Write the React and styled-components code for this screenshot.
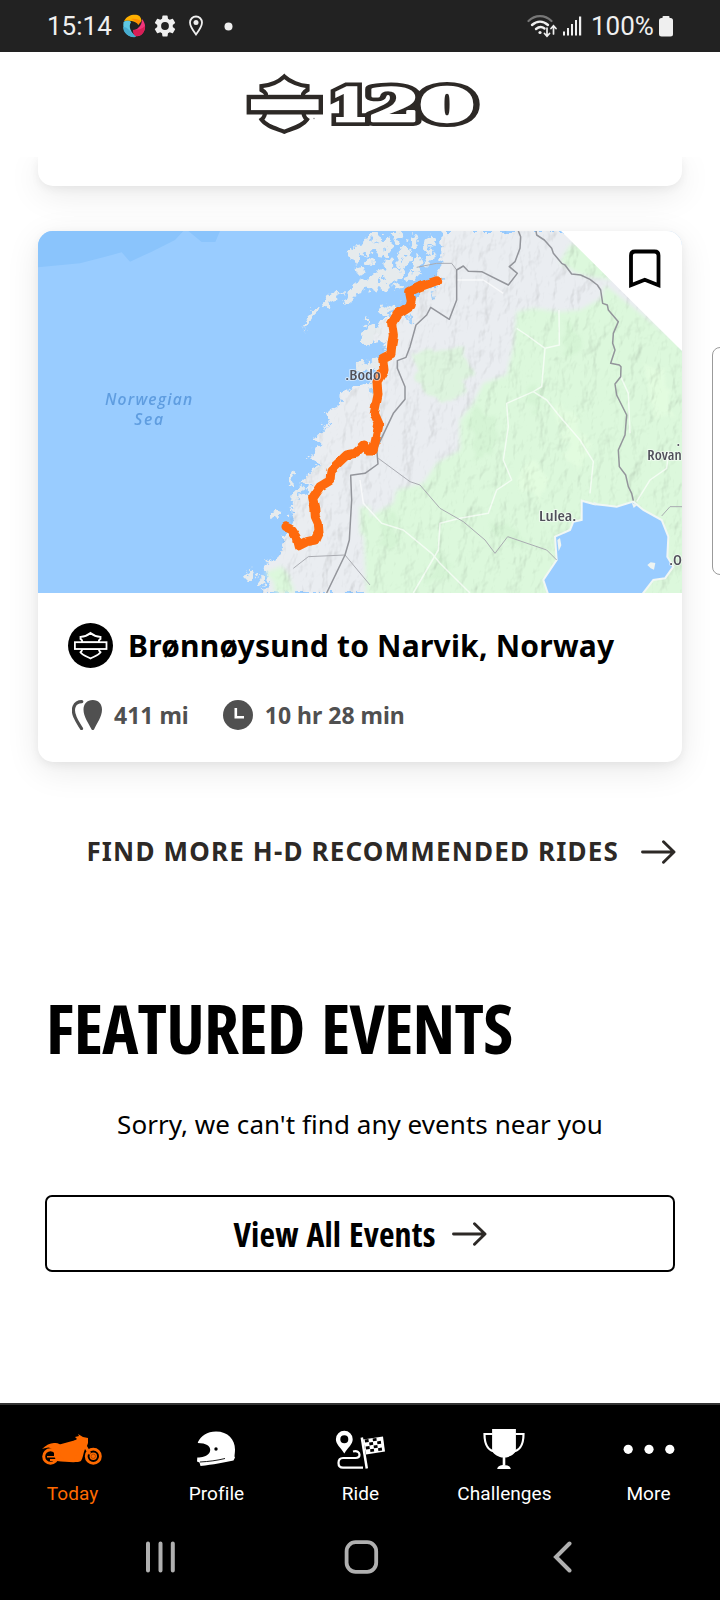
import React from "react";
import styled, { createGlobalStyle } from "styled-components";

const GlobalStyle = createGlobalStyle`
  *, *::before, *::after { box-sizing: border-box; }
  body { margin: 0; background: #fff; }
`;

const sans = `"Noto Sans", "Open Sans", sans-serif`;
const roboto = `Roboto, "Noto Sans", sans-serif`;
const ink = "#2d2926";

const Screen = styled.div`
  position: relative;
  display: flex;
  flex-direction: column;
  width: 720px;
  height: 1600px;
  overflow: hidden;
  background: #fff;
  font-family: ${sans};
  color: #000;
`;

const StatusBar = styled.div`
  display: flex;
  align-items: center;
  justify-content: space-between;
  height: 52px;
  flex: none;
  padding: 0 47px;
  background: #222;
  color: #efefef;
  font-family: ${roboto};
  font-size: 26px;
  line-height: 52px;
`;

const StatusGroup = styled.div`
  display: flex;
  align-items: center;
  height: 52px;
`;

const StatusText = styled.span`
  width: ${(p) => p.$width}px;
  white-space: nowrap;
`;

const Header = styled.header`
  position: relative;
  z-index: 2;
  display: flex;
  justify-content: center;
  flex: none;
  height: 105px;
  padding: 20px 0 0 3px;
  background: #fff;
`;

const Main = styled.main`
  flex: 1;
  display: flex;
  flex-direction: column;
`;

const Card = styled.article`
  flex: none;
  width: 644px;
  margin: ${(p) => p.$margin || "0 38px"};
  height: ${(p) => p.$height}px;
  border-radius: ${(p) => (p.$tail ? "0 0 15px 15px" : "15px")};
  background: #fff;
  box-shadow: 0 8px 34px rgba(0, 0, 0, 0.09), 0 3px 10px rgba(0, 0, 0, 0.06);
`;

const MapFrame = styled.div`
  position: relative;
  height: 362px;
  border-radius: 15px 15px 0 0;
  overflow: hidden;
  svg { display: block; }
`;

const Bookmark = styled.button`
  position: absolute;
  top: 0;
  right: 0;
  width: 121px;
  height: 120px;
  padding: 0;
  border: 0;
  background: none;
`;

const CardBody = styled.div`
  display: flex;
  flex-direction: column;
  gap: 32px;
  padding: 30px 30px 32px;
`;

const TitleRow = styled.div`
  display: flex;
  align-items: center;
  gap: 15px;
  height: 45px;
`;

const RideTitle = styled.h2`
  margin: 0;
  font-size: 30px;
  line-height: 45px;
  font-weight: 700;
  letter-spacing: 0.22px;
  white-space: nowrap;
`;

const Stats = styled.div`
  display: flex;
  height: 30px;
  padding-left: 4px;
  gap: 34px;
`;

const Stat = styled.div`
  display: flex;
  align-items: center;
  gap: 12px;
  color: #505050;
  font-size: 23px;
  line-height: 30px;
  font-weight: 700;
  white-space: nowrap;
`;

const MoreLink = styled.a`
  display: flex;
  align-items: center;
  justify-content: flex-end;
  flex: none;
  gap: 22px;
  height: 40px;
  margin: 70px 44px 0 0;
  color: ${ink};
  font-size: 26px;
  line-height: 38px;
  font-weight: 700;
  letter-spacing: 1.17px;
  white-space: nowrap;
`;

const LinkLabel = styled.span`
  height: 40px;
`;

const SectionTitle = styled.h1`
  flex: none;
  margin: 116px 0 0 46px;
  height: 80px;
  font-family: "Open Sans", "Noto Sans", sans-serif;
  font-stretch: 75%;
  font-size: 68.6px;
  line-height: 80px;
  font-weight: 700;
  letter-spacing: -0.75px;
  word-spacing: 5px;
  white-space: nowrap;
`;

const EmptyText = styled.p`
  flex: none;
  margin: 36px 0 0;
  height: 40px;
  font-size: 26px;
  line-height: 40px;
  letter-spacing: 0.05px;
  text-align: center;
  white-space: nowrap;
`;

const OutlineButton = styled.button`
  display: flex;
  align-items: center;
  justify-content: center;
  flex: none;
  gap: 16px;
  height: 77px;
  margin: 51px 45px 0;
  padding: 0;
  border: 2px solid #000;
  border-radius: 7px;
  background: #fff;
  color: #000;
  font-family: "Open Sans", "Noto Sans", sans-serif;
  font-stretch: 75%;
  font-size: 34px;
  font-weight: 700;
  letter-spacing: 0.16px;
  word-spacing: 1.5px;
  white-space: nowrap;
`;

const SidePanel = styled.div`
  position: absolute;
  left: 712px;
  top: 347px;
  width: 24px;
  height: 228px;
  border: 1.5px solid #9b9b9b;
  border-radius: 8px;
  background: #fff;
`;

const TabBar = styled.nav`
  display: grid;
  grid-template-columns: repeat(5, 144px);
  flex: none;
  height: 113px;
  border-top: 2px solid #333;
  background: #000;
`;

const Tab = styled.div`
  display: flex;
  flex-direction: column;
  align-items: center;
  padding: 20px 0 0 1px;
  gap: 12px;
  color: ${(p) => (p.$active ? "#ff6a00" : "#fff")};
  font-family: ${roboto};
  font-size: 19px;
  line-height: 26px;
  letter-spacing: 0.08px;
  svg { display: block; margin-right: 2px; }
`;

const SystemBar = styled.div`
  display: flex;
  align-items: center;
  justify-content: space-between;
  flex: none;
  height: 84px;
  padding: 0 148px 2px 146px;
  background: #000;
`;

/* ---------- icons ---------- */

const AppSwirl = () => (
  <svg width="24" height="24" viewBox="0 0 24 24">
    <path d="M2 7C5 2 9 .5 14 .8c4 .4 5 3 5.500 6L16 11C14 7 9 6 2 7z" fill="#ffb000" />
    <path d="M9 5c5-1 8 1 10.500 2L16 11C14 8 12 6 9 5z" fill="#ff8c00" />
    <path d="M20 5c4 5 4 10 1 14-3 4-7 4-9 2l-1-5c5-1 9-4 9-11z" fill="#f2357b" />
    <path d="M11 16c5 0 9-1 12-4 0 8-6 12-11 9z" fill="#d81e56" />
    <path d="M1.500 8C5 6 8 7 9 8c-3 5 0 10 5 15C6 24 0 18 1.500 8z" fill="#5fc8e4" />
    <path d="M1.200 13c4 0 6 3 12.800 10-7 1-13-4-12.800-10z" fill="#47add0" />
    <circle cx="12.500" cy="12" r="3.600" fill="#222" />
  </svg>
);

const Gear = () => (
  <svg width="26" height="26" viewBox="0 0 24 24" fill="#efefef">
    <path d="M19.140 12.940c.04-.3.06-.61.06-.94s-.02-.64-.07-.94l2.030-1.580a.49.490 0 0 0 .12-.61l-1.920-3.320a.49.490 0 0 0-.59-.22l-2.390.96a7 7 0 0 0-1.620-.94l-.36-2.540A.48.480 0 0 0 13.920 2.400h-3.840a.48.480 0 0 0-.47.410l-.36 2.540c-.59.24-1.130.57-1.620.94l-2.390-.96a.48.480 0 0 0-.59.220L2.740 8.870a.48.480 0 0 0 .12.610l2.030 1.580c-.05.3-.09.63-.09.940s.02.640.07.940l-2.030 1.580a.49.490 0 0 0-.12.610l1.920 3.320c.12.220.37.290.59.220l2.390-.96c.5.380 1.030.7 1.620.940l.36 2.540c.05.240.24.410.48.410h3.840c.24 0 .44-.17.470-.41l.36-2.540c.59-.24 1.130-.56 1.620-.94l2.390.96c.22.080.47 0 .59-.22l1.920-3.320a.47.470 0 0 0-.12-.61zM12 15.600a3.600 3.600 0 1 1 0-7.200 3.600 3.600 0 0 1 0 7.200z" />
  </svg>
);

const PlacePin = () => (
  <svg width="16" height="22" viewBox="0 0 16 22" fill="none">
    <path d="M8 1.500a6 6 0 0 1 6 6c0 4-6 12-6 12s-6-8-6-12a6 6 0 0 1 6-6z" stroke="#efefef" strokeWidth="1.800" />
    <circle cx="8" cy="7.600" r="2.500" fill="#efefef" />
  </svg>
);

const Dot = () => (
  <svg width="9" height="9"><circle cx="4.500" cy="4.500" r="4" fill="#efefef" /></svg>
);

const Wifi = () => (
  <svg width="30" height="24" viewBox="0 0 30 24" fill="none" strokeLinecap="round">
    <path d="M1.500 7C8 .5 18 .5 24.500 7" stroke="#777" strokeWidth="2.200" />
    <path d="M5 11c5-4.500 11-4.500 16 0M9 15c3-2.500 6-2.500 8.500-.5" stroke="#efefef" strokeWidth="2.400" />
    <circle cx="13" cy="18.500" r="1.600" fill="#efefef" />
    <path d="M20 14v8m-2.500-2.500L20 22.300l2.500-2.800M26.500 20v-8m-2.500 2.500 2.500-2.800 2.500 2.800" stroke="#efefef" strokeWidth="1.700" />
  </svg>
);

const Signal = () => (
  <svg width="19" height="20" fill="#efefef">
    <rect x="0" y="15.500" width="2" height="4" /><rect x="4" y="12" width="2" height="7.500" />
    <rect x="8" y="8" width="2" height="11.500" /><rect x="12" y="4" width="2" height="15.500" />
    <rect x="16" y="0.500" width="2.200" height="19" />
  </svg>
);

const Battery = () => (
  <svg width="14" height="21" fill="#efefef">
    <rect x="3.500" y="0" width="7" height="5" rx="1" /><rect x="0" y="2" width="14" height="18.500" rx="2.500" />
  </svg>
);

const logoLayers = [
  { color: ink, extra: 7.5 },
  { color: "#fff", extra: 0 },
];

const BrandLogo = () => (
  <svg width="236" height="66" viewBox="244 72 236 66" role="img">
    <path d="M284.300 76.500C290 82 300 85.500 307.500 86.200V90c-4 2-5.500 4-4 8H265.500c1.500-4 0-6-4-8v-3.800C269 85.500 278.500 82 284.300 76.500z" fill="#fff" stroke={ink} strokeWidth="4.200" />
    <path d="M264.500 112c1 3 0 5-3 7.500 4.500 6.500 13 8.500 22.800 12.300C294 128 302.500 126 307 119.500c-3-2.500-4-4.500-3-7.500z" fill="#fff" stroke={ink} strokeWidth="4.200" />
    <rect x="248.800" y="97" width="72" height="15.300" fill="#fff" stroke={ink} strokeWidth="4.400" />
    <circle cx="314" cy="118.500" r=".8" fill="#999" />
    {logoLayers.map(({ color, extra }) => (
      <g key={color} fontFamily="DejaVu Serif, serif" fontWeight="700" fill={color} stroke={color}>
        <text x="330" y="121.300" fontSize="45" strokeWidth={2.5 + extra} textLength="39" lengthAdjust="spacingAndGlyphs">1</text>
        <text x="368" y="121.300" fontSize="45" strokeWidth={2.5 + extra} strokeLinejoin="round" textLength="52" lengthAdjust="spacingAndGlyphs">2</text>
        <text x="422" y="120" fontSize="42" strokeWidth={5.5 + extra} strokeLinejoin="round" textLength="50" lengthAdjust="spacingAndGlyphs">0</text>
      </g>
    ))}
  </svg>
);

const Badge = () => (
  <svg width="45" height="45" viewBox="0 0 45 45">
    <circle cx="22.500" cy="22.500" r="22.500" fill="#000" />
    <g fill="#000" stroke="#fff" strokeWidth="1.800">
      <path d="M22.500 10c3 2.500 7 3.700 10 3.900v2c-1.700 1-2 2-1.500 3.500H14c.5-1.500.2-2.500-1.500-3.500v-2c3-.2 7-1.400 10-3.900z" />
      <path d="M14 26c.5 1.500 0 2-1.500 3.200 2 3 5.500 4 10 6.300 4.500-2.300 8-3.300 10-6.300-1.500-1.200-2-1.700-1.500-3.200z" />
      <rect x="6.900" y="19.200" width="31.600" height="6.800" />
    </g>
  </svg>
);

const DistanceIcon = () => (
  <svg width="30" height="30" viewBox="0 0 30 30" fill="none">
    <path d="M9.800 1.600C2 1.600-.5 9 3 17c2 5 4.500 8 6.500 11.500" stroke="#505050" strokeWidth="3.200" strokeLinecap="round" />
    <path d="M20.800 0C26.500 0 30 4 30 9.500 30 17 25 23 22.500 28.500c-.8 2-2.600 2-3.400 0C16.500 23 11.500 17 11.500 9.500 11.500 4 15 0 20.800 0z" fill="#505050" />
  </svg>
);

const ClockIcon = () => (
  <svg width="30" height="30" viewBox="0 0 30 30" fill="none">
    <circle cx="15" cy="15" r="15" fill="#505050" />
    <path d="M12.800 8v9.300H21" stroke="#fff" strokeWidth="2.600" />
  </svg>
);

const Arrow = () => (
  <svg width="35" height="24" viewBox="0 0 35 24" fill="none" stroke={ink} strokeWidth="2.900" strokeLinecap="round" strokeLinejoin="round">
    <path d="M1.500 12H33M22.500 1.700 33 12 22.500 22.300" />
  </svg>
);

const BookmarkIcon = () => (
  <svg width="121" height="120" viewBox="0 0 121 120">
    <path d="M0 0H121V120z" fill="#fff" />
    <path d="M70 54.200V24.500q0-4 4-4h19.500q4 0 4 4v29.700L83.800 48.700z" fill="none" stroke="#000" strokeWidth="3.800" />
  </svg>
);

/* ---------- ride map ---------- */

const islands = [
  "M820 335l8-35 12-25 12-10 18-6-6 18-18 18-14 20z",
  "M876 248l14-20 22-18 16 8-10 22-22 14-16 8z",
  "M924 218l14-2-8 14zM940 244l14-30 18-20 20-14 26-10 14 10-12 26-26 8-24 16-8 20z",
  "M960 85l18-10 10 12 20-30 22-2 10 30-24 22-22-4-16 30-20-8z",
  "M976 150l20-12 8 18-18 6zM1000 130l14-14 16 10-12 12z",
  "M1010 33h30l10 30-22 14-16-16z",
  "M1000 200l20-28 24-22 14 10 20-28 22 20 18-12-4 34-24 6-22 34-16-18-24 20z",
  "M1050 60l20-12 14 26-14 40-24-4-12-24zM1082 33h28l6 26-20 12z",
  "M1100 110l20-34 20 14 4 32-26 34-20-14zM1134 60l18-18 18 14-12 26-18-2z",
  "M1060 130l20-14 10 24-20 16zM1145 130l22-26 14 20-16 30-20 4z",
  "M1180 80l20-34 14 16-18 34zM1186 110l24-24 10 26-30 30z",
  "M1120 180l20-22 30 4-20 26zM1090 190l20-8 4 22-20 6z",
  "M1050 270l20-16 24 4-8 24-30 8zM1004 304l14-6-6 20zM990 345l20-18 16 8 10 30-28 14z",
  "M1010 330l30-18 24 14-14 22-30 4zM980 435l14-16 26 4 4 30-40 6z",
  "M1010 440l20-20 34-6-4 36-30 10z",
  "M770 795l8-18 14-20 8 12-14 24zM780 840l10-28 30-14 10 8-26 14-10 26z",
  "M845 750l20-12 22-8-4 16-24 12zM725 885l8-14 12 6-4 22z",
  "M640 1076l8-28 20-2 6 24-18 10zM680 1080l12-16 14 10-6 24-16-4z",
  "M700 1022l18-4-6 12z",
];

const RideMap = () => (
  <svg width="644" height="362" viewBox="24 33 1932 1086">
    <defs>
      <filter id="ragged" x="-5%" y="-5%" width="110%" height="110%">
        <feTurbulence type="fractalNoise" baseFrequency="0.045" numOctaves="3" seed="4" result="n" />
        <feDisplacementMap in="SourceGraphic" in2="n" scale="42" xChannelSelector="R" yChannelSelector="G" />
      </filter>
      <filter id="wiggle" x="-10%" y="-5%" width="120%" height="110%">
        <feTurbulence type="fractalNoise" baseFrequency="0.035" numOctaves="1" seed="2" result="n" />
        <feDisplacementMap in="SourceGraphic" in2="n" scale="13" xChannelSelector="R" yChannelSelector="G" />
      </filter>
      <filter id="relief" x="0" y="0" width="100%" height="100%">
        <feTurbulence type="fractalNoise" baseFrequency="0.022 0.012" numOctaves="4" seed="8" result="n" />
        <feDiffuseLighting in="n" surfaceScale="15" diffuseConstant="1.250" lightingColor="#fff" result="l">
          <feDistantLight azimuth="225" elevation="55" />
        </feDiffuseLighting>
        <feComposite in="l" in2="SourceAlpha" operator="in" />
      </filter>
      <filter id="soft"><feGaussianBlur stdDeviation="7" /></filter>
      <filter id="patchy" x="-20%" y="-20%" width="140%" height="140%">
        <feTurbulence type="fractalNoise" baseFrequency="0.02" numOctaves="3" seed="11" result="n" />
        <feDisplacementMap in="SourceGraphic" in2="n" scale="70" xChannelSelector="R" yChannelSelector="G" />
        <feGaussianBlur stdDeviation="5" />
      </filter>
      <path id="coast" d="M690 1119l30-34-10-25-10-25 40-15 15-30 5-40 30-15-15-55 25-50 30-10 15-30-35 0 40-40 25-15-35-15 10-30 30-10-25-25 25-30 25-15-20-30 40-20 5-40 30-10 60-20 30-30 24-40-20-30 10-30-50 10 20-50 40-30 40-20 30-20 30-40 50-10-14-24 24-40V33H1956V1119z" />
      <clipPath id="landclip"><use href="#coast" /></clipPath>
    </defs>
    <rect x="24" y="33" width="1932" height="1086" fill="#99ccff" />
    <path d="M24 33H460L435 60 365 95 300 125 275 97 220 112 150 130 24 142zM475 33H570L556 66 515 66z" fill="#8ac4fc" />

    <g filter="url(#ragged)" fill="#eaedf1">
      <use href="#coast" />
      {islands.map((d) => <path key={d} d={d} fill="#e6ebed" />)}
      <path d="M1062 70l8 20-6 12zM1112 118l8-10 0 20zM1040 190l8-16 4 14zM1100 150l12-6-4 14zM1158 60l6-10 2 14zM1200 70l6 0-6 14zM1020 60l10-10 2 16zM1084 50l8 10-8 20zM1132 96l10-4-4 24zM1172 110l8 0-8 20zM1060 170l12-4-6 16zM1000 100l10-12 2 14zM1120 170l10-4-2 14z" fill="#99ccff" />
      <path d="M1118 270l12 4 8 22-10-6zM1140 286l14 12-6 16-10-14zM1205 215l8 4 4 22-8-6zM1104 246l14-6 4 10zM1232 170l16 8-6 6zM1056 372l14 6-10 20zM1010 510l22-4 6 12-18 6z" fill="#a8d3fb" />
    </g>

    <g filter="url(#soft)" fill="#dcf8dc">
      <path d="M1460 275L1510 265 1590 275 1650 270 1715 235 1725 195 1970 390V1135H1010L1000 900 1090 850 1100 810 1180 790 1220 730 1290 690 1290 600 1330 550 1360 490 1430 465 1450 380z" />
      <path d="M1590 125L1620 75 1660 70 1750 180 1690 172 1640 160z" />
      <path d="M990 860l30 0V960l-30-20z" />
      <path d="M735 1119l-5-35-25-25 50-20 20 25 20 55z" />
    </g>
    <g filter="url(#patchy)">
      <path d="M1150 400l80-25 70 20 20 60-20 60-50 24-80-50z" fill="#dcf4dc" opacity=".9" />
      <path d="M1330 560l60 20 20 60-30 60-60 10zM1500 480l40 20-10 60-30 10zM1600 300l50 40-20 80-30-20zM1200 1000l60 10 10 60-60 10zM1060 880l50 20-10 80-40 0zM1380 900l80 30 20 60-70-20z" fill="#cdf0cd" opacity=".5" />
      <path d="M1590 560l40 10 60 120-30 60-60-40zM1840 420l70 30 20 150-60-20zM1500 720l50 60-20 60-60-40z" fill="#e4fce0" opacity=".8" />
    </g>

    <g clipPath="url(#landclip)" style={{ mixBlendMode: "multiply" }} opacity=".23">
      <use href="#coast" filter="url(#relief)" />
    </g>

    <g transform="translate(990 0)">
      <path d="M565 1125L550 1080 590 1020 585 950 630 930 640 905 665 900V842L700 852 735 856 770 860 820 845 850 870 905 900 925 950 922 1010 940 1040 915 1075 880 1080 845 1125z" fill="#99ccff" stroke="#f1f7f4" strokeWidth="6" />
      <path d="M862 1035l10-8 14 2-4 20-10-4zM592 960l8-6 4 22-8 18zM700 845l5 12 6-8zM815 848l6 16 10-8z" fill="#eef4f2" />
      <g fill="none" stroke="#fff" strokeWidth="4.500" opacity=".65" strokeLinejoin="round">
        <path d="M470 325L500 345 555 385 598 375 597 270M555 385L545 500 520 515 440 550 445 620 430 720 455 780 410 810 385 880 300 895 240 910 235 990 200 1050 160 1119" />
        <path d="M520 515L560 540 600 590 660 660 700 725 690 820M830 845L870 780 920 745 925 700M780 465L805 520 810 640M0 780L10 850 65 910 130 930 215 1000 240 1030 330 1119" />
        <path d="M290 180L370 180 430 220" />
      </g>
      <g fill="none" stroke="#a9abb1" strokeWidth="3">
        <path d="M55 715L150 785 180 795 240 865 310 905 375 960 405 1000 443 950 560 990 590 1020M905 888L930 860 966 860M170 142L230 130 275 130 290 150" />
        <path d="M-200 1045L-155 1010-45 1005 30 1095" />
      </g>
      <g fill="none" stroke="#93959b" strokeWidth="4.500" strokeLinejoin="round">
        <path d="M475 33L482 50 480 85 465 125 448 140 472 160 445 195 365 155 325 154 310 138 290 150V240L268 298 212 262 200 285 168 315 150 380 138 412 112 422 112 445 135 500V538L100 580 50 685 54 732 15 760-28 766-25 840-32 960-45 1005-100 1119" />
        <path d="M528 33L530 45 553 60 575 85 580 100 605 130 615 135 635 162 662 165 690 178 712 195 722 210 728 250 742 255 745 270 775 305 760 340 758 370 765 390 752 430 778 435 783 440 782 470 765 492 770 525 800 585 795 645 775 690 778 740 797 765 805 800 815 820 820 842" />
      </g>
    </g>

    <g filter="url(#wiggle)">
      <path d="M765 920L783 928 798 950 805 978 830 965 855 960 867 935 865 910 856 890 854 860 848 832 870 800 900 782 903 750 950 705 975 700 1003 675 1014 690 1030 690 1038 655 1047 612 1033 580 1044 525 1041 485 1062 450 1058 415 1083 402 1086 370 1090 345 1085 310 1102 282 1140 257 1144 240 1139 215 1170 200 1220 182" fill="none" stroke="#ff6a08" strokeWidth="27" strokeLinejoin="round" strokeLinecap="round" />
    </g>

    <g fontFamily="Open Sans, Noto Sans, sans-serif" fontSize="43" fontWeight="600" style={{ fontStretch: "80%" }} fill="#50505a" stroke="#fff" strokeOpacity=".6" strokeWidth="5" paintOrder="stroke">
      <text x="946" y="481" textLength="106" lengthAdjust="spacingAndGlyphs">.Bodo</text>
      <text x="1527" y="903" textLength="112" lengthAdjust="spacingAndGlyphs">Lulea.</text>
      <text x="1852" y="720" textLength="103" lengthAdjust="spacingAndGlyphs">Rovan</text>
      <text x="1918" y="1036" textLength="38" lengthAdjust="spacingAndGlyphs">.O</text>
      <circle cx="1945" cy="675" r="3" />
    </g>
    <g fontFamily="Open Sans, Noto Sans, sans-serif" fontStyle="italic" fontWeight="600" style={{ fontStretch: "90%" }} fontSize="47" fill="#5f9de0">
      <text x="225" y="556" textLength="262" lengthAdjust="spacing">Norwegian</text>
      <text x="313" y="616" textLength="86" lengthAdjust="spacing">Sea</text>
    </g>
  </svg>
);

/* ---------- tab icons ---------- */

const Motorcycle = () => (
  <svg width="60" height="44" viewBox="42 1425 60 44" fill="#ff6a00">
    <path d="M42 1449c4-4 8-6 12-6 4-.5 6 1 8 3 5 0 10-4 15-7l-2-2 4-1-1-2 5 3 5 1v5l-1 3 4 7-2 2-4-6c-2 5-2 9-4 12-3 2-15 1-24 0l-3-5c1-6-4-10-8-8-2 0-3 1-4 1z" />
    <circle cx="50.500" cy="1456.500" r="6.800" fill="none" stroke="#ff6a00" strokeWidth="3" />
    <path d="M47 1456h9v1.500h-9zM50 1459h7v2h-7z" />
    <circle cx="93.300" cy="1456.300" r="7.100" fill="none" stroke="#ff6a00" strokeWidth="2.800" />
    <circle cx="93.300" cy="1456.300" r="3.700" />
    <circle cx="93.300" cy="1456.300" r="2.200" fill="none" stroke="#8a3900" strokeWidth=".6" />
    <path d="M54 1446l8 2-2 7 4 5 10 0 8-18-6-2z" />
  </svg>
);

const Helmet = () => (
  <svg width="40" height="44" viewBox="196 1425 40 44">
    <path d="M198 1442c3-6 9-10.500 18-10.500 12 0 19 8 19 18 0 3-.5 5-.5 7l.5 1-1.500 3c-10 2-20 4-33 5.500l-1-3.500-2.500-1 .3-4c5 0 9-1 12-4.500 2.500-4 0-8-6-9.500l-5.500-.5z" fill="#fff" />
    <path d="M200 1462c9-.5 17-1.500 25-3.500" stroke="#000" strokeWidth=".9" fill="none" />
    <circle cx="216" cy="1449" r="1.700" />
  </svg>
);

const RideIcon = () => (
  <svg width="50" height="44" viewBox="335 1425 50 44" fill="none">
    <path fillRule="evenodd" d="M344.300 1430.800a8.400 8.400 0 0 1 8.400 8.400c0 5-4.500 8-8.400 14.300-3.900-6.300-8.400-9.300-8.400-14.300a8.400 8.400 0 0 1 8.400-8.400zm0 4.400a4 4 0 1 0 0 8 4 4 0 0 0 0-8z" fill="#fff" />
    <path d="M353 1451.500c4-1 6.500.5 6.500 3.300 0 2.200-1.500 3.200-4 3.200H343c-3 0-4.500 2-4.500 5 0 3 1.500 4.700 4.500 4.700h20" stroke="#fff" strokeWidth="2.200" />
    <path d="M361.800 1437.500l5 31" stroke="#fff" strokeWidth="2.500" />
    <path d="M363 1439.500l20-3 2 15-19 3z" fill="#fff" />
    <g fill="#000" transform="rotate(-8 373 1445)">
      {[[0, 0], [8, 0], [4, 3.500], [12, 3.500], [0, 7], [8, 7], [4, 10.300], [12, 10.300]].map(([x, y]) => (
        <rect key={`${x}-${y}`} x={365.500 + x} y={1438.500 + y} width="3.800" height="2.900" />
      ))}
    </g>
  </svg>
);

const Trophy = () => (
  <svg width="42" height="44" viewBox="483.500 1425 42 44" fill="#fff">
    <path d="M492.600 1429h23.800v20c0 5-5 7-9.500 8.500h-4.800c-4.500-1.500-9.500-3.500-9.500-8.500z" />
    <path d="M493 1434h-8c0 9 2 17 12.500 18M516 1434h8c0 9-2 17-12.500 18" fill="none" stroke="#fff" strokeWidth="2.200" />
    <path d="M503.200 1455h2.600v10h-2.600zM497.700 1469.500c0-3 3-4.500 6.800-4.500s6.800 1.500 6.800 4.500z" />
  </svg>
);

const MoreDots = () => (
  <svg width="54" height="44" viewBox="620.500 1425 54 44" fill="#fff">
    <circle cx="627.700" cy="1449.300" r="4.600" /><circle cx="648.500" cy="1449.300" r="4.600" /><circle cx="669.300" cy="1449.300" r="4.600" />
  </svg>
);

const Recents = () => (
  <svg width="30" height="32" stroke="#b0b0b0" strokeWidth="4" strokeLinecap="round"><path d="M2 2.500v27M14.500 2.500v27M26.800 2.500v27" /></svg>
);
const Home = () => (
  <svg width="41" height="34" fill="none"><rect x="2.600" y="2.200" width="29.600" height="29.600" rx="9" stroke="#b0b0b0" strokeWidth="3.800" /></svg>
);
const Back = () => (
  <svg width="19" height="32" fill="none"><path d="M16.500 2.500 3 16l13.500 13.500" stroke="#b0b0b0" strokeWidth="4" strokeLinecap="round" /></svg>
);

const tabs = [
  { label: "Today", Icon: Motorcycle, active: true },
  { label: "Profile", Icon: Helmet },
  { label: "Ride", Icon: RideIcon },
  { label: "Challenges", Icon: Trophy },
  { label: "More", Icon: MoreDots },
];

const Spaced = styled.span`
  display: flex;
  margin-left: ${(p) => p.$left}px;
`;

export default function App() {
  return (
    <Screen>
      <GlobalStyle />
      <StatusBar>
        <StatusGroup>
          <StatusText $width={75}>15:14</StatusText>
          <AppSwirl />
          <Spaced $left={6}><Gear /></Spaced>
          <Spaced $left={10}><PlacePin /></Spaced>
          <Spaced $left={20}><Dot /></Spaced>
        </StatusGroup>
        <StatusGroup>
          <Wifi />
          <Spaced $left={6}><Signal /></Spaced>
          <Spaced $left={9}><StatusText $width={68}>100%</StatusText></Spaced>
          <Battery />
        </StatusGroup>
      </StatusBar>

      <Header><BrandLogo /></Header>

      <Main>
        <Card $tail $height={29} />
        <Card $margin="45px 38px 0" $height={531}>
          <MapFrame>
            <RideMap />
            <Bookmark aria-label="Bookmark"><BookmarkIcon /></Bookmark>
          </MapFrame>
          <CardBody>
            <TitleRow>
              <Badge />
              <RideTitle>Brønnøysund to Narvik, Norway</RideTitle>
            </TitleRow>
            <Stats>
              <Stat><DistanceIcon />411 mi</Stat>
              <Stat><ClockIcon />10 hr 28 min</Stat>
            </Stats>
          </CardBody>
        </Card>
        <MoreLink><LinkLabel>FIND MORE H-D RECOMMENDED RIDES</LinkLabel><Arrow /></MoreLink>
        <SectionTitle>FEATURED EVENTS</SectionTitle>
        <EmptyText>Sorry, we can't find any events near you</EmptyText>
        <OutlineButton>View All Events<Arrow /></OutlineButton>
      </Main>

      <SidePanel />

      <TabBar>
        {tabs.map(({ label, Icon, active }) => (
          <Tab key={label} $active={active}><Icon />{label}</Tab>
        ))}
      </TabBar>
      <SystemBar><Recents /><Home /><Back /></SystemBar>
    </Screen>
  );
}
